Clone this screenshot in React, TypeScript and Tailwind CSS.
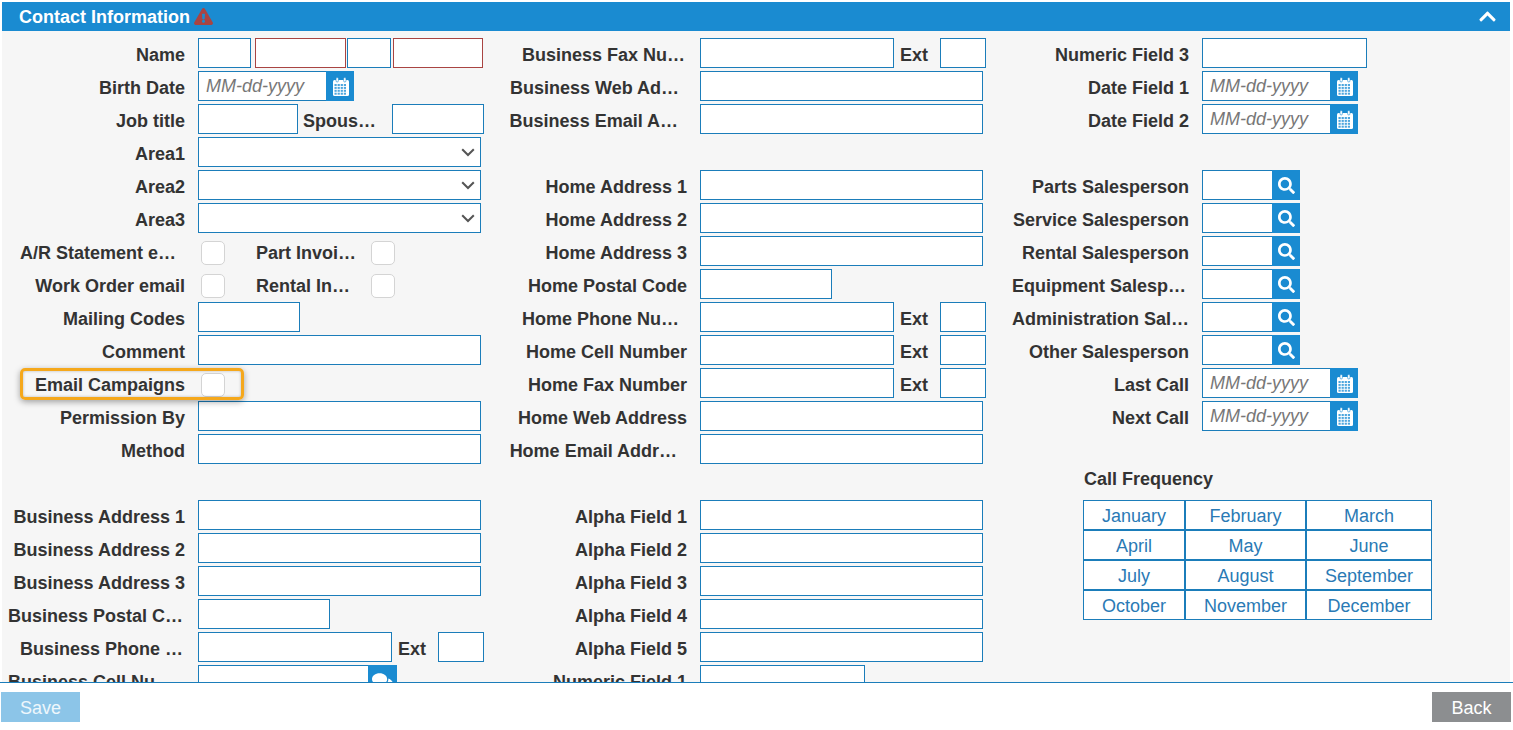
import React from "react";
import { FaChevronUp, FaComments, FaExclamationTriangle, FaSearch } from "react-icons/fa";

const inputBase = "h-[30px] bg-white border border-[#1b7dba] shrink-0";

function CalendarIcon() {
  const cells = [];
  for (let r = 0; r < 4; r++) {
    for (let c = 0; c < 4; c++) {
      cells.push(<rect key={`${r}-${c}`} x={2.5 + c * 3.1} y={7 + r * 2.9} width="2.2" height="2" fill="#4da6de" />);
    }
  }
  return (
    <svg width="18" height="19" viewBox="0 0 18 19" fill="none">
      <rect x="1" y="3" width="16" height="16" rx="1.5" fill="#fff" />
      <rect x="4" y="0.5" width="2.4" height="4.5" rx="1.2" fill="#fff" stroke="#1a8bd1" strokeWidth="0.6" />
      <rect x="11.6" y="0.5" width="2.4" height="4.5" rx="1.2" fill="#fff" stroke="#1a8bd1" strokeWidth="0.6" />
      {cells}
    </svg>
  );
}

function Label({ text, pr = "" }: { text: string; pr?: string }) {
  return (
    <div className={`w-[183px] shrink-0 text-right font-bold text-[#333] whitespace-nowrap leading-[30px] pt-[2px] ${pr}`}>
      {text}
    </div>
  );
}

function Row({ label, pr, children }: { label?: string; pr?: string; children?: React.ReactNode }) {
  return (
    <div className="flex h-[30px] mb-[3px]">
      <Label text={label ?? ""} pr={pr} />
      <div className="flex ml-[13px] items-start">{children}</div>
    </div>
  );
}

function DateField() {
  return (
    <div className="flex">
      <div className={`${inputBase} w-[128px] border-r-0 pl-[7px] italic text-[#777] leading-[28px]`}>MM-dd-yyyy</div>
      <div className="w-[28px] h-[30px] bg-[#1a8bd1] flex items-center justify-center pl-[2px]">
        <CalendarIcon />
      </div>
    </div>
  );
}

function SearchField() {
  return (
    <div className="flex">
      <div className={`${inputBase} w-[70px] border-r-0`} />
      <div className="w-[28px] h-[30px] bg-[#1a8bd1] flex items-center justify-center">
        <FaSearch className="text-white text-[17px]" />
      </div>
    </div>
  );
}

function SelectField() {
  return (
    <div className={`${inputBase} w-[283px] flex items-center justify-end pr-[5px]`}>
      <svg width="14" height="9" viewBox="0 0 14 9" fill="none">
        <path d="M1.2 1.2L7 7l5.8-5.8" stroke="#555" strokeWidth="2" />
      </svg>
    </div>
  );
}

function Check({ className = "" }: { className?: string }) {
  return <div className={`w-[24px] h-[24px] mt-[5px] rounded-[5px] bg-white border border-[#d4d4d4] shrink-0 ${className}`} />;
}

function PhoneRow({ label, pr }: { label: string; pr?: string }) {
  return (
    <Row label={label} pr={pr}>
      <div className={`${inputBase} w-[194px]`} />
      <div className="w-[46px] pl-[6px] font-bold text-[#333] leading-[30px] pt-[2px]">Ext</div>
      <div className={`${inputBase} w-[46px]`} />
    </Row>
  );
}

function Wide({ label, pr }: { label?: string; pr?: string }) {
  return (
    <Row label={label} pr={pr}>
      <div className={`${inputBase} w-[283px]`} />
    </Row>
  );
}

const months = [
  ["January", "February", "March"],
  ["April", "May", "June"],
  ["July", "August", "September"],
  ["October", "November", "December"],
];

export default function App() {
  return (
    <div className="h-screen w-full flex flex-col bg-white overflow-hidden pt-[2px] font-['Liberation_Sans',Arial,sans-serif] text-[18px]">
      {/* Panel header */}
      <div className="mx-[2px] w-[1508px] h-[29px] shrink-0 bg-[#1a8bd1] flex items-center justify-between pl-[17px] pr-[13px]">
        <div className="flex items-center gap-[4px] text-white font-bold">
          <span className="pt-[1px]">Contact Information</span>
          <FaExclamationTriangle className="text-[#a94442] text-[19px]" />
        </div>
        <FaChevronUp className="text-white text-[19px]" />
      </div>

      <div className="relative mx-[2px] w-[1508px] h-[651px] shrink-0 overflow-hidden bg-[#f6f6f6] pt-[7px] grid grid-cols-[502px_502px_502px] items-start">
        <div>
          <Row label="Name">
            <div className={`${inputBase} w-[53px]`} />
            <div className={`${inputBase} w-[91px] ml-[4px] border-[#a94442]`} />
            <div className={`${inputBase} w-[44px] ml-[1px]`} />
            <div className={`${inputBase} w-[90px] ml-[2px] border-[#a94442]`} />
          </Row>
          <Row label="Birth Date">
            <DateField />
          </Row>
          <Row label="Job title">
            <div className={`${inputBase} w-[100px]`} />
            <div className="w-[94px] pl-[5px] font-bold text-[#333] leading-[30px] pt-[2px] whitespace-nowrap">Spous…</div>
            <div className={`${inputBase} w-[92px]`} />
          </Row>
          <Row label="Area1">
            <SelectField />
          </Row>
          <Row label="Area2">
            <SelectField />
          </Row>
          <Row label="Area3">
            <SelectField />
          </Row>
          <Row label="A/R Statement e…" pr="pr-[9px]">
            <Check className="ml-[3px]" />
            <div className="w-[146px] pl-[31px] font-bold text-[#333] leading-[30px] pt-[2px] whitespace-nowrap">Part Invoi…</div>
            <Check />
          </Row>
          <Row label="Work Order email">
            <Check className="ml-[3px]" />
            <div className="w-[146px] pl-[31px] font-bold text-[#333] leading-[30px] pt-[2px] whitespace-nowrap">Rental In…</div>
            <Check />
          </Row>
          <Row label="Mailing Codes">
            <div className={`${inputBase} w-[102px]`} />
          </Row>
          <Wide label="Comment" />
          <Row label="Email Campaigns">
            <Check className="ml-[3px]" />
          </Row>
          <Wide label="Permission By" />
          <Wide label="Method" />
          <Row />
          <Wide label="Business Address 1" />
          <Wide label="Business Address 2" />
          <Wide label="Business Address 3" />
          <Row label="Business Postal C…" pr="pr-[2px]">
            <div className={`${inputBase} w-[132px]`} />
          </Row>
          <Row label="Business Phone …" pr="pr-[2px]">
            <div className={`${inputBase} w-[194px]`} />
            <div className="w-[46px] pl-[6px] font-bold text-[#333] leading-[30px] pt-[2px]">Ext</div>
            <div className={`${inputBase} w-[46px]`} />
          </Row>
          <Row label="Business Cell Nu…" pr="pr-[12px]">
            <div className={`${inputBase} w-[170px] border-r-0`} />
            <div className="w-[29px] h-[30px] bg-[#1a8bd1] flex items-start justify-center pt-[6px]">
              <FaComments className="text-white text-[21px]" />
            </div>
          </Row>
        </div>

        <div>
          <PhoneRow label="Business Fax Nu…" pr="pr-[2px]" />
          <Wide label="Business Web Ad…" pr="pr-[8px]" />
          <Wide label="Business Email A…" pr="pr-[9px]" />
          <Row />
          <Wide label="Home Address 1" />
          <Wide label="Home Address 2" />
          <Wide label="Home Address 3" />
          <Row label="Home Postal Code">
            <div className={`${inputBase} w-[132px]`} />
          </Row>
          <PhoneRow label="Home Phone Nu…" pr="pr-[8px]" />
          <PhoneRow label="Home Cell Number" />
          <PhoneRow label="Home Fax Number" />
          <Wide label="Home Web Address" />
          <Wide label="Home Email Addr…" pr="pr-[10px]" />
          <Row />
          <Wide label="Alpha Field 1" />
          <Wide label="Alpha Field 2" />
          <Wide label="Alpha Field 3" />
          <Wide label="Alpha Field 4" />
          <Wide label="Alpha Field 5" />
          <Row label="Numeric Field 1">
            <div className={`${inputBase} w-[165px]`} />
          </Row>
        </div>

        <div>
          <Row label="Numeric Field 3">
            <div className={`${inputBase} w-[165px]`} />
          </Row>
          <Row label="Date Field 1">
            <DateField />
          </Row>
          <Row label="Date Field 2">
            <DateField />
          </Row>
          <Row />
          <Row label="Parts Salesperson">
            <SearchField />
          </Row>
          <Row label="Service Salesperson">
            <SearchField />
          </Row>
          <Row label="Rental Salesperson">
            <SearchField />
          </Row>
          <Row label="Equipment Salesp…" pr="pr-[3px]">
            <SearchField />
          </Row>
          <Row label="Administration Sal…">
            <SearchField />
          </Row>
          <Row label="Other Salesperson">
            <SearchField />
          </Row>
          <Row label="Last Call">
            <DateField />
          </Row>
          <Row label="Next Call">
            <DateField />
          </Row>
          <div className="ml-[77px] mt-[36px]">
            <div className="font-bold text-[#333] leading-[24px] h-[24px] pl-[1px]">Call Frequency</div>
            <div className="mt-[9px] w-[349px] grid grid-cols-[102px_121px_124px] border border-[#1b7dba]">
              {months.flat().map((m, i) => (
                <div
                  key={m}
                  className={`bg-white text-center text-[#2a7ab5] leading-[30px] border-[#1b7dba] ${i < 9 ? "h-[30px] border-b-2" : "h-[28px]"} ${i % 3 !== 2 ? "border-r-2" : ""}`}
                >
                  {m}
                </div>
              ))}
            </div>
          </div>
        </div>

        {/* Highlight callout around the Email Campaigns row */}
        <div className="absolute left-[18px] top-[337px] w-[224px] h-[32px] rounded-[5px] border-[3px] border-[#f5a81c] shadow-[0_2px_6px_rgba(0,0,0,0.35),inset_0_0_3px_rgba(0,0,0,0.25)]" />
      </div>

      {/* Footer */}
      <div className="flex-1 border-t border-[#1b7dba] flex items-start justify-between pt-[9px] pl-[1px] pr-[2px]">
        <div className="w-[79px] h-[30px] bg-[#8cc5e8] text-[#eef7fc] text-center leading-[32px]">Save</div>
        <div className="w-[79px] h-[30px] bg-[#8c8e90] text-white text-center leading-[32px]">Back</div>
      </div>
    </div>
  );
}
